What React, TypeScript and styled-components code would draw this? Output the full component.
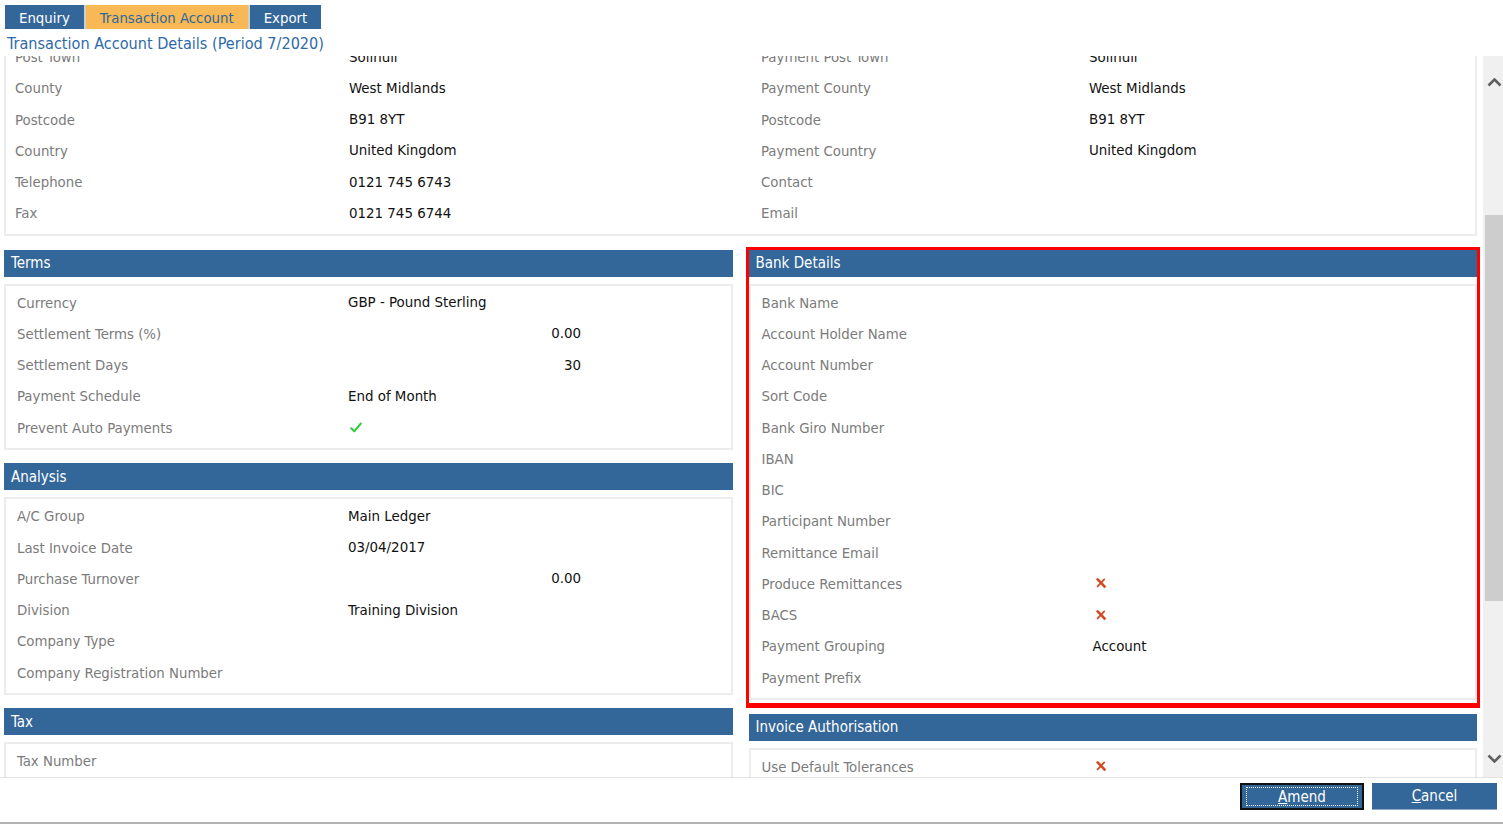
import React, { useLayoutEffect, useRef } from "react";
import styled, { createGlobalStyle } from "styled-components";

const GlobalStyle = createGlobalStyle`
  html, body { margin: 0; padding: 0; background: #fff; }
  body { font-family: "DejaVu Sans Condensed", "DejaVu Sans", sans-serif; }
`;

const BLUE = "#336699";

const Page = styled.div`
  height: 824px;
  display: flex;
  flex-direction: column;
  overflow: hidden;
`;

const TabBar = styled.div`
  display: flex;
  margin: 5px 0 0 5px;
  height: 24px;
`;

const Tab = styled.div<{ $active?: boolean }>`
  padding: 0 14px;
  line-height: 25px;
  font-size: 14.8px;
  background: ${(p) => (p.$active ? "#f6b955" : BLUE)};
  color: ${(p) => (p.$active ? BLUE : "#fff")};
  border-left: ${(p) => (p.$active ? "2px solid #cfcfcf" : "none")};
  border-right: ${(p) => (p.$active ? "2px solid #cfcfcf" : "none")};
`;

const Title = styled.div`
  height: 27px;
  line-height: 29px;
  padding-left: 7px;
  font-size: 16.1px;
  color: #2f6aa8;
`;

const Main = styled.div`
  flex: 1;
  min-height: 0;
  display: flex;
`;

const ScrollArea = styled.div`
  flex: 1;
  overflow: hidden;
`;

const Content = styled.div`
  padding: 0 6px 40px 4px;
`;

const Box = styled.div`
  border: 2px solid #ececec;
  padding: 1px 0 5px 9px;
  margin-bottom: 14px;
`;

const AddressRow = styled.div`
  display: grid;
  grid-template-columns: 334px 412px 328px 1fr;
  height: 31.25px;
  align-items: center;
`;

const Columns = styled.div`
  display: grid;
  grid-template-columns: 1fr 1fr;
  column-gap: 16px;
  align-items: start;
`;

const SectionHeader = styled.div`
  height: 27px;
  background: ${BLUE};
  color: #fff;
  font-size: 15px;
  padding-left: 7px;
  display: flex;
  align-items: center;
  margin-bottom: 7px;
`;

const SectionBody = styled.div<{ $last?: boolean }>`
  border: 2px solid #ececec;
  padding: 1px 0 5px 11px;
  margin-bottom: ${(p) => (p.$last ? "0" : "13.5px")};
`;

const Highlight = styled.div`
  outline: 3px solid #ff0000;
  padding-bottom: 3px;
  border-bottom: 2px solid #ff0000;
  margin-bottom: 9px;
`;

const FieldRow = styled.div`
  display: grid;
  grid-template-columns: 331px 233px 1fr;
  height: 31.25px;
  align-items: center;
`;

const Label = styled.span`
  color: #7b7b7b;
  font-size: 14.8px;
  white-space: nowrap;
`;

const Value = styled.span<{ $right?: boolean }>`
  color: #111;
  font-size: 14.9px;
  white-space: nowrap;
  text-align: ${(p) => (p.$right ? "right" : "left")};
`;

const IconCell = styled.span<{ $offset: number }>`
  display: flex;
  align-items: center;
  padding-left: ${(p) => p.$offset}px;
`;

const Scrollbar = styled.div`
  width: 20px;
  background: #f0f0f0;
  display: flex;
  flex-direction: column;
`;

const ArrowBox = styled.div<{ $h: number }>`
  height: ${(p) => p.$h}px;
  display: flex;
  align-items: center;
  justify-content: flex-end;
  padding-right: 1px;
`;

const Track = styled.div`
  flex: 1;
  padding-left: 2px;
`;

const Thumb = styled.div`
  margin-top: 106px;
  height: 386px;
  background: #cdcdcd;
`;

const Footer = styled.div`
  border-top: 1px solid #e3e3e3;
  border-bottom: 2px solid #b4b4b4;
  display: flex;
  justify-content: flex-end;
  align-items: flex-start;
  padding: 5px 6px 0 0;
  gap: 8px;
  box-sizing: border-box;
  height: 47px;
`;

const Button = styled.button<{ $focused?: boolean; $w: number }>`
  width: ${(p) => p.$w}px;
  height: 27px;
  background: ${BLUE};
  color: #fff;
  font-family: "DejaVu Sans Condensed", "DejaVu Sans", sans-serif;
  font-size: 15px;
  border: ${(p) => (p.$focused ? "2px solid #111" : "none")};
  border-bottom: ${(p) => (p.$focused ? "2px solid #111" : "1px solid #8fa9c6")};
  padding: 0;
  position: relative;
  display: flex;
  align-items: center;
  justify-content: center;
  cursor: pointer;
`;

const FocusRing = styled.span`
  position: absolute;
  left: 4px;
  right: 4px;
  top: 2px;
  bottom: 2px;
  border: 1px dotted #fff;
`;

const Check = () => (
  <svg width="12" height="11" viewBox="0 0 12 11">
    <path d="M1.2 6.2 L4.3 9.3 L10.8 1.5" fill="none" stroke="#2ecc40" strokeWidth="2" strokeLinecap="round" strokeLinejoin="round" />
  </svg>
);

const Cross = () => (
  <svg width="10" height="10" viewBox="0 0 10 10">
    <path d="M1.6 1.4 Q5 4.6 8.6 8.6" fill="none" stroke="#d5461e" strokeWidth="2.6" strokeLinecap="round" />
    <path d="M8.2 1.4 Q5 4.8 1.6 8.4" fill="none" stroke="#c9502a" strokeWidth="1.9" strokeLinecap="round" />
  </svg>
);

const Chevron = ({ up }: { up?: boolean }) => (
  <svg width="15" height="9" viewBox="0 0 15 9">
    <polyline
      points={up ? "1.5,7.5 7.5,1.5 13.5,7.5" : "1.5,1.5 7.5,7.5 13.5,1.5"}
      fill="none"
      stroke="#606060"
      strokeWidth="2.6"
    />
  </svg>
);

type Field = { label: string; value?: string; kind?: "text" | "num" | "check" | "cross" };

const Fields = ({ rows, iconOffset }: { rows: Field[]; iconOffset: number }) => (
  <>
    {rows.map((r) => (
      <FieldRow key={r.label}>
        <Label>{r.label}</Label>
        {r.kind === "check" ? (
          <IconCell $offset={2}>
            <Check />
          </IconCell>
        ) : r.kind === "cross" ? (
          <IconCell $offset={iconOffset}>
            <Cross />
          </IconCell>
        ) : (
          <Value $right={r.kind === "num"}>{r.value ?? ""}</Value>
        )}
      </FieldRow>
    ))}
  </>
);

const address: [string, string, string, string][] = [
  ["Post Town", "Solihull", "Payment Post Town", "Solihull"],
  ["County", "West Midlands", "Payment County", "West Midlands"],
  ["Postcode", "B91 8YT", "Postcode", "B91 8YT"],
  ["Country", "United Kingdom", "Payment Country", "United Kingdom"],
  ["Telephone", "0121 745 6743", "Contact", ""],
  ["Fax", "0121 745 6744", "Email", ""],
];

const terms: Field[] = [
  { label: "Currency", value: "GBP - Pound Sterling" },
  { label: "Settlement Terms (%)", value: "0.00", kind: "num" },
  { label: "Settlement Days", value: "30", kind: "num" },
  { label: "Payment Schedule", value: "End of Month" },
  { label: "Prevent Auto Payments", kind: "check" },
];

const analysis: Field[] = [
  { label: "A/C Group", value: "Main Ledger" },
  { label: "Last Invoice Date", value: "03/04/2017" },
  { label: "Purchase Turnover", value: "0.00", kind: "num" },
  { label: "Division", value: "Training Division" },
  { label: "Company Type" },
  { label: "Company Registration Number" },
];

const tax: Field[] = [{ label: "Tax Number" }, { label: "Tax Code" }];

const bank: Field[] = [
  { label: "Bank Name" },
  { label: "Account Holder Name" },
  { label: "Account Number" },
  { label: "Sort Code" },
  { label: "Bank Giro Number" },
  { label: "IBAN" },
  { label: "BIC" },
  { label: "Participant Number" },
  { label: "Remittance Email" },
  { label: "Produce Remittances", kind: "cross" },
  { label: "BACS", kind: "cross" },
  { label: "Payment Grouping", value: "Account" },
  { label: "Payment Prefix" },
];

const invoice: Field[] = [{ label: "Use Default Tolerances", kind: "cross" }, { label: "Tolerance" }];

export default function App() {
  const scrollRef = useRef<HTMLDivElement>(null);
  useLayoutEffect(() => {
    if (scrollRef.current) scrollRef.current.scrollTop = 18;
  }, []);

  return (
    <Page>
      <GlobalStyle />
      <TabBar>
        <Tab>Enquiry</Tab>
        <Tab $active>Transaction Account</Tab>
        <Tab>Export</Tab>
      </TabBar>
      <Title>Transaction Account Details (Period 7/2020)</Title>
      <Main>
        <ScrollArea ref={scrollRef}>
          <Content>
            <Box>
              {address.map((a) => (
                <AddressRow key={a[0] + a[2]}>
                  <Label>{a[0]}</Label>
                  <Value>{a[1]}</Value>
                  <Label>{a[2]}</Label>
                  <Value>{a[3]}</Value>
                </AddressRow>
              ))}
            </Box>
            <Columns>
              <div>
                <SectionHeader>Terms</SectionHeader>
                <SectionBody>
                  <Fields rows={terms} iconOffset={3} />
                </SectionBody>
                <SectionHeader>Analysis</SectionHeader>
                <SectionBody>
                  <Fields rows={analysis} iconOffset={3} />
                </SectionBody>
                <SectionHeader>Tax</SectionHeader>
                <SectionBody>
                  <Fields rows={tax} iconOffset={3} />
                </SectionBody>
              </div>
              <div>
                <Highlight>
                  <SectionHeader>Bank Details</SectionHeader>
                  <SectionBody $last>
                    <Fields rows={bank} iconOffset={3} />
                  </SectionBody>
                </Highlight>
                <SectionHeader>Invoice Authorisation</SectionHeader>
                <SectionBody>
                  <Fields rows={invoice} iconOffset={3} />
                </SectionBody>
              </div>
            </Columns>
          </Content>
        </ScrollArea>
        <Scrollbar>
          <ArrowBox $h={53}>
            <Chevron up />
          </ArrowBox>
          <Track>
            <Thumb />
          </Track>
          <ArrowBox $h={37}>
            <Chevron />
          </ArrowBox>
        </Scrollbar>
      </Main>
      <Footer>
        <Button $focused $w={124}>
          <FocusRing />
          <span>
            <u>A</u>mend
          </span>
        </Button>
        <Button $w={125}>
          <span>
            <u>C</u>ancel
          </span>
        </Button>
      </Footer>
    </Page>
  );
}
